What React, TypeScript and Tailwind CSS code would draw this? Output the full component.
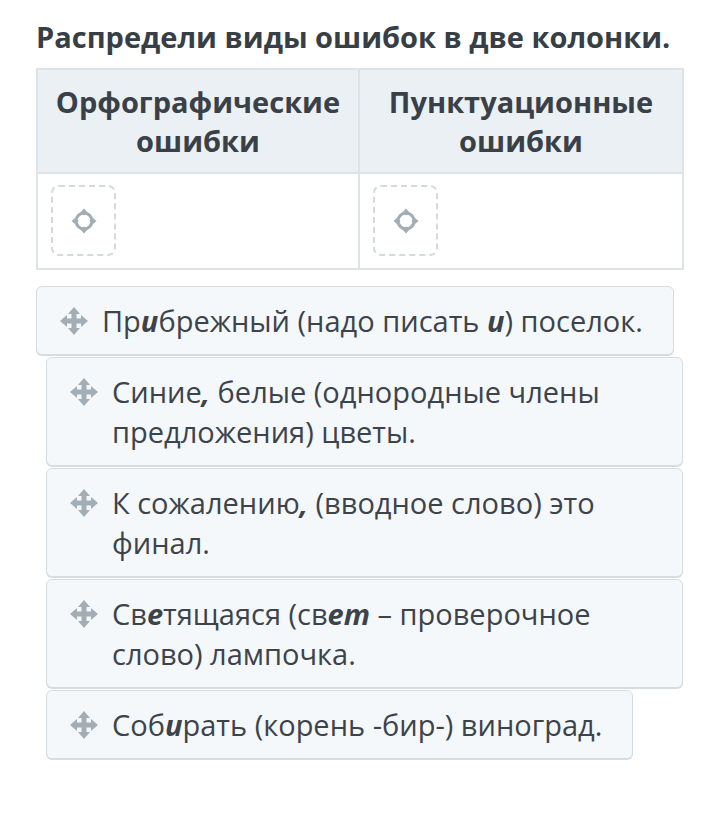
import React from "react";

function MoveIcon() {
  return (
    <svg width="30" height="30" viewBox="0 0 30 30" className="shrink-0">
      <g fill="#a3adb5">
        <rect x="12.5" y="6" width="5" height="18" rx="1" />
        <rect x="6" y="12.5" width="18" height="5" rx="1" />
        <polygon points="15,1 21,8 9,8" />
        <polygon points="15,29 21,22 9,22" />
        <polygon points="1,15 8,9 8,21" />
        <polygon points="29,15 22,9 22,21" />
      </g>
    </svg>
  );
}

function TargetIcon() {
  return (
    <svg width="28" height="28" viewBox="0 0 28 28">
      <circle cx="14" cy="14" r="8" fill="none" stroke="#a3adb5" strokeWidth="3" />
      <g fill="#a3adb5">
        <polygon points="14,1.5 17.5,5.5 14,8.5 10.5,5.5" />
        <polygon points="14,26.5 17.5,22.5 14,19.5 10.5,22.5" />
        <polygon points="1.5,14 5.5,10.5 8.5,14 5.5,17.5" />
        <polygon points="26.5,14 22.5,10.5 19.5,14 22.5,17.5" />
      </g>
    </svg>
  );
}

function Placeholder() {
  return (
    <div className="ml-[13px] mt-[11px] flex h-[71px] w-[65px] items-center justify-center rounded-[8px] border-2 border-dashed border-[#d3d9de]">
      <TargetIcon />
    </div>
  );
}

function Item({ children, className = "" }: { children: React.ReactNode; className?: string }) {
  return (
    <div
      className={
        "flex items-start gap-[13px] rounded-[6px] border border-[#d6dde2] bg-[#f4f8fb] py-[13.5px] pl-[22px] pr-[30px] shadow-[0_1px_0_#d6dde2] " +
        className
      }
    >
      <div className="flex h-[40px] items-center">
        <MoveIcon />
      </div>
      <div className="text-[29px] leading-[40px] text-[#3d434a]">{children}</div>
    </div>
  );
}

export default function App() {
  return (
    <div className="min-h-[819px] w-[720px] bg-white pl-[36px] pt-[17px]" style={{ fontFamily: '"Open Sans", sans-serif' }}>
      <h1 className="text-[29px] font-bold leading-[40px] text-[#383e45]">Распредели виды ошибок в две колонки.</h1>
      <div className="mt-[11px] w-[648px] border-2 border-[#dde3e7]">
        <div className="grid grid-cols-2 bg-[#eaf0f4]">
          <div className="flex h-[102px] items-center justify-center border-r-2 border-[#dde3e7] text-center text-[29px] font-bold leading-[39px] text-[#3a4047]">
            Орфографические
            <br />
            ошибки
          </div>
          <div className="flex h-[102px] items-center justify-center text-center text-[29px] font-bold leading-[39px] text-[#3a4047]">
            Пунктуационные
            <br />
            ошибки
          </div>
        </div>
        <div className="grid h-[96px] grid-cols-2 border-t-2 border-[#dde3e7] bg-white">
          <div className="border-r-2 border-[#dde3e7]">
            <Placeholder />
          </div>
          <div>
            <Placeholder />
          </div>
        </div>
      </div>
      <div className="mt-[16px] flex flex-col items-start gap-[2px]">
        <Item className="w-fit whitespace-nowrap">
          Пр<b className="font-bold italic">и</b>брежный (надо писать <b className="font-bold italic">и</b>) поселок.
        </Item>
        <Item className="ml-[10px] w-[637px]">
          Синие<b className="font-bold italic">,</b> белые (однородные члены предложения) цветы.
        </Item>
        <Item className="ml-[10px] w-[637px]">
          К сожалению<b className="font-bold italic">,</b> (вводное слово) это финал.
        </Item>
        <Item className="ml-[10px] w-[637px]">
          Св<b className="font-bold italic">е</b>тящаяся (св<b className="font-bold italic">ет</b> – проверочное слово) лампочка.
        </Item>
        <Item className="ml-[10px] w-fit whitespace-nowrap">
          Соб<b className="font-bold italic">и</b>рать (корень -бир-) виноград.
        </Item>
      </div>
    </div>
  );
}
